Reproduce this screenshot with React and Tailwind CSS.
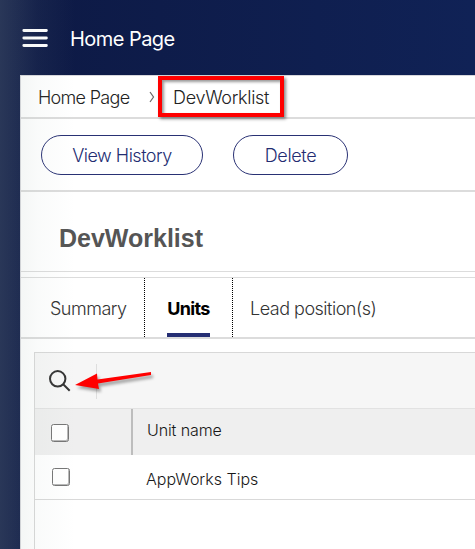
import React from "react";

function Label({ children, className = "" }) {
  return <span className={`block whitespace-nowrap ${className}`}>{children}</span>;
}

function Checkbox({ className = "" }) {
  return (
    <span
      role="checkbox"
      aria-checked="false"
      className={`block size-[18px] shrink-0 rounded-[2.5px] border border-[#757575] bg-white shadow-[inset_-1px_-1px_0_#b8b8b8] ${className}`}
    />
  );
}

function Header() {
  return (
    <header className="flex h-[75px] items-start pl-[22px] pt-[25px] text-white">
      <svg className="mt-[2px] h-[24px] w-[26px]" viewBox="0 0 26 24" fill="none" stroke="currentColor" strokeWidth="2.8" strokeLinecap="round">
        <path d="M1.8 3.5H24.4M1.8 11H24.4M1.8 18.5H24.4" />
      </svg>
      <Label className="ml-[22px] text-[20px] leading-[28px] tracking-[-0.55px]">Home Page</Label>
    </header>
  );
}

function Breadcrumb() {
  return (
    <nav className="flex h-[43px] items-center border-b-2 border-[#dcdcdc] pl-[17px] text-[18px] font-light leading-6 text-[#222]">
      <Label className="w-[92px] pt-[3px] tracking-[-0.7px]">Home Page</Label>
      <svg className="ml-[18px] h-[12px] w-[8px]" viewBox="0 0 8 12" fill="none" stroke="#666" strokeWidth="1.2">
        <path d="M2 1L5.5 6L2 11" />
      </svg>
      <Label className="ml-[17px] pt-[3px] tracking-[-0.3px]">DevWorklist</Label>
    </nav>
  );
}

function Tabs() {
  return (
    <div className="mt-[5px] flex h-[62px] border-y border-b-2 border-[#dcdcdc] text-[18px] font-light leading-6 text-[#333]">
      <div className="w-[123px] pl-[29px] pt-[19px]"><Label className="tracking-[-0.5px]">Summary</Label></div>
      <div className="flex w-[89px] flex-col items-center justify-between border-x border-dotted border-black pt-[19px]">
        <Label className="font-bold tracking-[-0.65px] text-black">Units</Label>
        <div className="h-[4px] w-[43px] bg-[#252e73]" />
      </div>
      <div className="pl-[17px] pt-[19px]"><Label className="tracking-[-0.5px]">Lead position(s)</Label></div>
    </div>
  );
}

function UnitGrid() {
  return (
    <div className="ml-[13px] mt-[13px] h-[200px] border-l border-t border-[#d8d8d8] text-[16px] font-light leading-5 text-[#181818]">
      <div className="flex h-[56px] border-b border-[#e2e2e2] bg-[#f6f6f6]">
        <div className="w-[61px] pl-[14px] pt-[16px]">
          <svg className="h-[23px] w-[22px]" viewBox="0 0 22 23" fill="none" stroke="#333" strokeWidth="2">
            <circle cx="8.7" cy="9.8" r="7.7" />
            <path d="M14.2 15.3L20.7 21.7" />
          </svg>
        </div>
        <div className="mt-[11px] h-[35px] w-px bg-[#dedede]" />
      </div>
      <div className="flex h-[46px] bg-[#efefef]">
        <div className="w-[98px] border-r-2 border-[#bdbdbd] pl-[16px] pt-[15px]"><Checkbox /></div>
        <Label className="pl-[14px] pt-[11px] tracking-[-0.1px]">Unit name</Label>
      </div>
      <div className="flex h-[45px] border-b border-[#d9d9d9] bg-white">
        <div className="w-[98px] pl-[17px] pt-[13px]"><Checkbox /></div>
        <Label className="pl-[13px] pt-[14px]">AppWorks Tips</Label>
      </div>
    </div>
  );
}

export default function App() {
  return (
    <div className="relative h-[549px] w-[475px] overflow-hidden bg-linear-to-r from-[#0d1944] to-[#102256] font-['Inter',sans-serif]">
      <Header />
      <main className="ml-[20px] h-[474px] border-l border-t border-[#d7d7dc] bg-white">
        <Breadcrumb />
        <div className="flex h-[73px] gap-[30px] border-b-2 border-[#dcdcdc] pl-[20px] pt-[16px] text-[18px] font-light text-[#232d72]">
          <button className="h-[40px] w-[162px] whitespace-nowrap rounded-full border border-[#293174] pt-px tracking-[-0.5px]">View History</button>
          <button className="h-[40px] w-[115px] whitespace-nowrap rounded-full border border-[#293174] pt-px tracking-[-0.35px]">Delete</button>
        </div>
        <div className="h-[80px] border-b border-[#dcdcdc] pl-[38px] pt-[30px]">
          <Label className="font-['Liberation_Sans',sans-serif] text-[25px] font-bold leading-[32px] text-[#555]">DevWorklist</Label>
        </div>
        <Tabs />
        <UnitGrid />
      </main>
      <div className="pointer-events-none absolute inset-y-0 left-0 w-[75px] bg-linear-to-r from-[rgba(165,185,175,0.19)] via-[rgba(165,185,175,0.06)] to-transparent" />
      <div className="pointer-events-none absolute left-[158px] top-[76px] h-[41px] w-[126px] border-4 border-[#f00] shadow-[2px_2px_3px_rgba(0,0,0,0.45),inset_2px_2px_3px_rgba(0,0,0,0.4)]" />
      <svg className="pointer-events-none absolute left-[74px] top-[368px] h-[28px] w-[86px] drop-shadow-[2px_3px_1.5px_rgba(0,0,0,0.35)]" viewBox="0 0 86 28">
        <path fill="#f00" d="M1 17L23 5.5L23.5 11.5L77 4V7L24 15.5L25 21Z" />
      </svg>
    </div>
  );
}
